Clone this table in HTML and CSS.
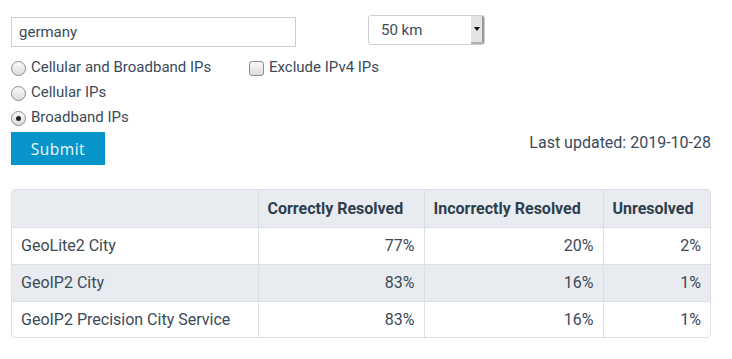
FILE: index.html
```html
<!DOCTYPE html>
<html>
<head>
<meta charset="utf-8">
<link rel="stylesheet" href="styles.css">
</head>
<body>
<div class="page">
  <form class="form">
    <div class="top-row">
      <input class="search" type="text" value="germany">
      <span class="select-wrap">
        <span class="select-value">50 km</span>
        <span class="select-btn"><span class="arrow"></span></span>
      </span>
    </div>
    <div class="options">
      <div class="radios">
        <label class="opt"><input type="radio" name="t" class="radio"><span>Cellular and Broadband IPs</span></label>
        <label class="opt"><input type="radio" name="t" class="radio"><span>Cellular IPs</span></label>
        <label class="opt"><input type="radio" name="t" class="radio" checked><span>Broadband IPs</span></label>
      </div>
      <div class="checks">
        <label class="opt"><input type="checkbox" class="check"><span>Exclude IPv4 IPs</span></label>
      </div>
    </div>
    <div class="submit-row">
      <button type="button" class="submit">Submit</button>
      <span class="updated">Last updated: 2019-10-28</span>
    </div>
  </form>
  <div class="table-wrap">
    <table class="results">
      <colgroup>
        <col class="c1"><col class="c2"><col class="c3"><col class="c4">
      </colgroup>
      <thead>
        <tr><th></th><th>Correctly Resolved</th><th>Incorrectly Resolved</th><th>Unresolved</th></tr>
      </thead>
      <tbody>
        <tr><td>GeoLite2 City</td><td class="num">77%</td><td class="num">20%</td><td class="num">2%</td></tr>
        <tr class="alt"><td>GeoIP2 City</td><td class="num">83%</td><td class="num">16%</td><td class="num">1%</td></tr>
        <tr class="last"><td>GeoIP2 Precision City Service</td><td class="num">83%</td><td class="num">16%</td><td class="num">1%</td></tr>
      </tbody>
    </table>
  </div>
</div>
</body>
</html>
```
FILE: styles.css
```css
* { box-sizing: border-box; }
body {
  margin: 0;
  background: #fff;
  font-family: Roboto, "Liberation Sans", sans-serif;
  font-size: 15px;
  color: #3b4a59;
}
.page {
  padding: 15px 21px 0 11px;
  width: 732px;
}
.form { display: flex; flex-direction: column; }
.top-row {
  display: flex;
  align-items: flex-start;
  height: 32px;
}
.search {
  margin-top: 2px;
  width: 285px;
  height: 30px;
  border: 1px solid #cfcfcf;
  padding: 0 7px;
  font-family: Roboto, sans-serif;
  font-size: 15px;
  color: #3b4a59;
  outline: none;
}
.select-wrap {
  margin-left: 72px;
  width: 117px;
  height: 30px;
  border: 1px solid #cfcfcf;
  border-radius: 3px;
  display: flex;
  overflow: hidden;
}
.select-value {
  flex: 1;
  padding-left: 12px;
  line-height: 28px;
  color: #3b4a59;
}
.select-btn {
  width: 13px;
  background: #e4e4e4;
  border-right: 2px solid #9a9a9a;
  border-bottom: 2px solid #b0b0b0;
  display: flex;
  align-items: center;
  justify-content: center;
}
.arrow {
  width: 0; height: 0;
  border-left: 3px solid transparent;
  border-right: 3px solid transparent;
  border-top: 4px solid #111;
}
.options {
  display: flex;
  margin-top: 9px;
}
.radios { width: 238px; display: flex; flex-direction: column; gap: 3px; }
.checks { display: flex; flex-direction: column; }
.opt {
  display: flex;
  align-items: center;
  height: 22px;
  cursor: pointer;
}
.opt span { margin-left: 5px; }
.radio, .check {
  appearance: none;
  -webkit-appearance: none;
  margin: 2px 0 0 0;
  width: 15px;
  height: 15px;
  border: 1px solid #8d8d8d;
  background: linear-gradient(#fafafa, #dcdcdc);
}
.radio { border-radius: 50%; position: relative; }
.check { border-radius: 3px; }
.radio:checked::after {
  content: "";
  position: absolute;
  left: 4px; top: 4px;
  width: 5px; height: 5px;
  border-radius: 50%;
  background: #222;
}
.submit-row {
  display: flex;
  justify-content: space-between;
  align-items: flex-start;
  margin-top: 4px;
}
.submit {
  width: 94px;
  height: 33px;
  border: 0;
  background: #0795c9;
  color: #f2f8fa;
  font-family: "Open Sans", sans-serif;
  font-size: 15.5px;
  letter-spacing: 0.5px;
  padding: 0;
}
.updated { color: #3b4a59; font-size: 16px; margin-top: 1px; }
.table-wrap {
  margin-top: 24px;
  width: 700px;
  border: 1px solid #dcdfe3;
  border-radius: 4px;
  overflow: hidden;
  font-size: 16px;
}
.results {
  width: 100%;
  border-collapse: collapse;
  table-layout: fixed;
}
.c1 { width: 246px; }
.c2 { width: 166px; }
.c3 { width: 179px; }
.c4 { width: 107px; }
.results th {
  background: #e8ebef;
  height: 37px;
  text-align: left;
  padding: 0 9px;
  font-weight: 700;
  color: #2f3e4d;
  border-left: 1px solid #dcdfe3;
}
.results td {
  height: 37px;
  padding: 0 9px;
  border-top: 1px solid #dcdfe3;
  border-left: 1px solid #dcdfe3;
}
.results tr.last td { height: 36px; }
.results th:first-child, .results td:first-child { border-left: 0; }
.results tr.alt td { background: #e8ebef; }
.num { text-align: right; }
```
